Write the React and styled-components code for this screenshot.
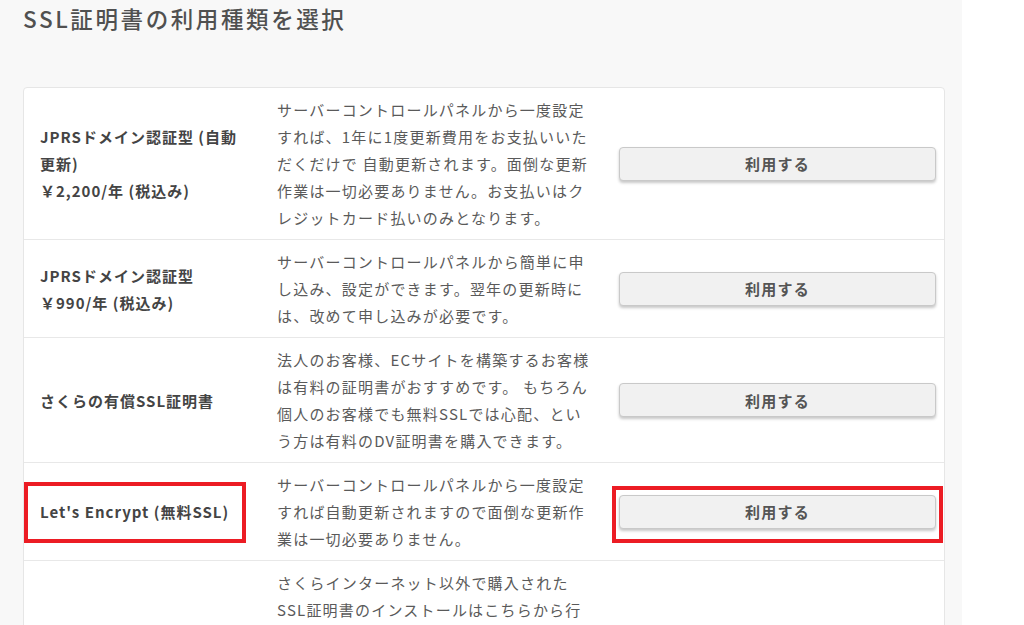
import React from "react";
import styled, { createGlobalStyle } from "styled-components";

const GlobalStyle = createGlobalStyle`
  html, body {
    margin: 0;
    padding: 0;
    background: #ffffff;
  }
  body {
    font-family: "Noto Sans CJK JP", "Noto Sans", sans-serif;
    color: #555;
  }
  * { box-sizing: border-box; }
`;

const Main = styled.main`
  width: 962px;
  min-height: 625px;
  background: #f8f8f8;
  padding: 3px 17px 0 23px;
`;

const Title = styled.h2`
  margin: 0 0 53px 0;
  font-size: 22.5px;
  line-height: 31px;
  font-weight: 500;
  letter-spacing: 2.6px;
  color: #505050;
`;

const Card = styled.section`
  background: #fff;
  border: 1px solid #e6e6e6;
  border-radius: 4px;
`;

const Row = styled.div`
  display: grid;
  grid-template-columns: 237px 343px 1fr;
  align-items: center;
  border-top: ${(p) => (p.$first ? "none" : "1px solid #e8e8e8")};
`;

const Cell = styled.div`
  position: relative;
  align-self: stretch;
  display: flex;
  align-items: center;
  padding: 8px 16px;
`;

const NameCell = styled(Cell)`
  font-size: 15px;
  font-weight: 700;
  line-height: 27px;
  letter-spacing: 1px;
  color: #444;
`;

const DescCell = styled(Cell)`
  font-size: 15px;
  line-height: 27px;
  letter-spacing: 1.2px;
  color: #5a5a5a;
  white-space: nowrap;
`;

const ActionCell = styled(Cell)`
  padding: 8px 8px 8px 15px;
`;

const UseButton = styled.button`
  width: 100%;
  height: 34px;
  border: 1px solid #c9c9c9;
  border-radius: 4px;
  background: #f1f1f1;
  box-shadow: 0 2px 3px rgba(0, 0, 0, 0.22);
  font-family: "Noto Sans CJK JP", "Noto Sans", sans-serif;
  font-size: 15px;
  font-weight: 700;
  letter-spacing: 1.2px;
  color: #555;
  cursor: pointer;
  padding: 0;
`;

const Highlight = styled.span`
  position: absolute;
  left: ${(p) => p.$left}px;
  top: 50%;
  width: ${(p) => p.$width}px;
  height: ${(p) => p.$height}px;
  margin-top: ${(p) => p.$offset}px;
  border: 4px solid #ec1c24;
  pointer-events: none;
`;

const rows = [
  {
    name: ["JPRSドメイン認証型 (自動", "更新)", "￥2,200/年 (税込み)"],
    desc: [
      "サーバーコントロールパネルから一度設定",
      "すれば、1年に1度更新費用をお支払いいた",
      "だくだけで 自動更新されます。面倒な更新",
      "作業は一切必要ありません。お支払いはク",
      "レジットカード払いのみとなります。",
    ],
  },
  {
    name: ["JPRSドメイン認証型", "￥990/年 (税込み)"],
    desc: [
      "サーバーコントロールパネルから簡単に申",
      "し込み、設定ができます。翌年の更新時に",
      "は、改めて申し込みが必要です。",
    ],
  },
  {
    name: ["さくらの有償SSL証明書"],
    desc: [
      "法人のお客様、ECサイトを構築するお客様",
      "は有料の証明書がおすすめです。 もちろん",
      "個人のお客様でも無料SSLでは心配、とい",
      "う方は有料のDV証明書を購入できます。",
    ],
  },
  {
    name: ["Let's Encrypt (無料SSL)"],
    desc: [
      "サーバーコントロールパネルから一度設定",
      "すれば自動更新されますので面倒な更新作",
      "業は一切必要ありません。",
    ],
    highlight: true,
  },
  {
    name: ["他社で購入した証明書"],
    desc: [
      "さくらインターネット以外で購入された",
      "SSL証明書のインストールはこちらから行",
      "えます。証明書の内容をコントロールパネ",
      "ルから入力するだけで、簡単に設定するこ",
      "とができます。中間CA証明書も同時に設",
      "定できます。",
    ],
  },
];

const Lines = ({ lines }) => (
  <div>
    {lines.map((l, i) => (
      <React.Fragment key={i}>
        {l}
        {i < lines.length - 1 && <br />}
      </React.Fragment>
    ))}
  </div>
);

export default function App() {
  return (
    <>
      <GlobalStyle />
      <Main>
        <Title>SSL証明書の利用種類を選択</Title>
        <Card>
          {rows.map((r, i) => (
            <Row key={i} $first={i === 0}>
              <NameCell>
                <Lines lines={r.name} />
                {r.highlight && (
                  <Highlight $left={0} $width={222} $height={61} $offset={-30} />
                )}
              </NameCell>
              <DescCell>
                <Lines lines={r.desc} />
              </DescCell>
              <ActionCell>
                <UseButton>利用する</UseButton>
                {r.highlight && (
                  <Highlight $left={8} $width={331} $height={57} $offset={-26} />
                )}
              </ActionCell>
            </Row>
          ))}
        </Card>
      </Main>
    </>
  );
}
